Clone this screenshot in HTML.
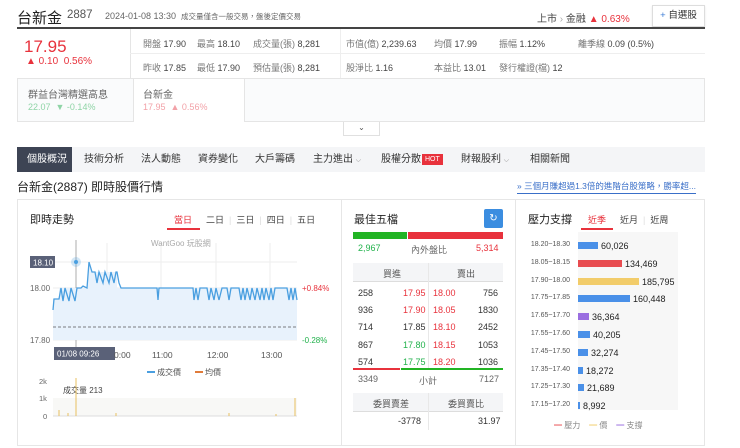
<!DOCTYPE html>
<html><head><meta charset="utf-8"><style>
*{margin:0;padding:0;box-sizing:border-box}
body{width:740px;height:448px;overflow:hidden;background:#fff;font-family:"Liberation Sans","Noto Sans CJK TC",sans-serif;color:#333;position:relative}
.a{position:absolute;white-space:nowrap}
.r{color:#e8323c}.g{color:#22b24c}
.s{font-size:9px;color:#444}
.lbl{color:#777}
</style></head><body>
<!-- header -->
<div class="a" style="left:17px;top:7px;font-size:15px;color:#222">台新金</div>
<div class="a" style="left:67px;top:9px;font-size:11.5px;color:#555">2887</div>
<div class="a" style="left:105px;top:11px;font-size:9px;color:#666">2024-01-08 13:30</div>
<div class="a" style="left:181px;top:11px;font-size:7.5px;color:#666">成交量僅含一般交易，盤後定價交易</div>
<div class="a" style="left:537px;top:10px;font-size:10px;color:#444">上市 <span style="color:#aaa">›</span> 金融 <span class="r">▲ 0.63%</span></div>
<div class="a" style="left:652px;top:5px;width:53px;height:22px;border:1px solid #ddd;box-shadow:0 1px 2px rgba(0,0,0,.1);font-size:9.5px;color:#333;text-align:center;line-height:20px;background:#fff"><span style="color:#3a7bd5">+</span> 自選股</div>
<div class="a" style="left:17px;top:27px;width:688px;height:2px;background:#444"></div>
<!-- price block -->
<div class="a" style="left:130px;top:29px;width:1px;height:49px;background:#e5e5e5"></div>
<div class="a" style="left:130px;top:53px;width:575px;height:1px;background:#eee"></div>
<div class="a" style="left:340px;top:29px;width:1px;height:49px;background:#eee"></div>
<div class="a r" style="left:24px;top:37px;font-size:17px">17.95</div>
<div class="a r" style="left:26px;top:56px;font-size:10px">▲ 0.10&nbsp; 0.56%</div>
<div class="a s" style="left:143px;top:37px"><span class="lbl">開盤</span> 17.90</div>
<div class="a s" style="left:197px;top:37px"><span class="lbl">最高</span> 18.10</div>
<div class="a s" style="left:253px;top:37px"><span class="lbl">成交量(張)</span> 8,281</div>
<div class="a s" style="left:346px;top:37px"><span class="lbl">市值(億)</span> 2,239.63</div>
<div class="a s" style="left:434px;top:37px"><span class="lbl">均價</span> 17.99</div>
<div class="a s" style="left:499px;top:37px"><span class="lbl">振幅</span> 1.12%</div>
<div class="a s" style="left:578px;top:37px"><span class="lbl">離季線</span> 0.09 (0.5%)</div>
<div class="a s" style="left:143px;top:61px"><span class="lbl">昨收</span> 17.85</div>
<div class="a s" style="left:197px;top:61px"><span class="lbl">最低</span> 17.90</div>
<div class="a s" style="left:253px;top:61px"><span class="lbl">預估量(張)</span> 8,281</div>
<div class="a s" style="left:346px;top:61px"><span class="lbl">股淨比</span> 1.16</div>
<div class="a s" style="left:434px;top:61px"><span class="lbl">本益比</span> 13.01</div>
<div class="a s" style="left:499px;top:61px"><span class="lbl">發行權證(檔)</span> 12</div>
<!-- cards -->
<div class="a" style="left:17px;top:78px;width:688px;height:44px;border:1px solid #e5e5e5;background:#fafbfc"></div>
<div class="a" style="left:133px;top:79px;width:112px;height:43px;background:#fff;border-left:1px solid #e5e5e5;border-right:1px solid #e5e5e5"></div>
<div class="a" style="left:28px;top:86px;font-size:10px;color:#666">群益台灣精選高息</div>
<div class="a" style="left:28px;top:102px;font-size:9px;color:#8fd4a6">22.07 &nbsp;▼ -0.14%</div>
<div class="a" style="left:143px;top:86px;font-size:10px;color:#666">台新金</div>
<div class="a" style="left:143px;top:102px;font-size:9px;color:#f2a2a8">17.95 &nbsp;▲ 0.56%</div>
<div class="a" style="left:343px;top:122px;width:37px;height:14px;border:1px solid #e0e0e0;border-top:none;font-size:8px;text-align:center;color:#555;line-height:12px">⌄</div>
<!-- tabs -->
<div class="a" style="left:17px;top:147px;width:688px;height:25px;background:#f4f5f7"></div>
<div class="a" style="left:17px;top:147px;width:55px;height:25px;background:#3d4454"></div>
<div class="a" style="left:17px;top:147px;height:25px;line-height:25px;font-size:10px;color:#333">
<span style="position:absolute;left:10px;color:#fff">個股概況</span>
<span style="position:absolute;left:67px">技術分析</span>
<span style="position:absolute;left:124px">法人動態</span>
<span style="position:absolute;left:181px">資券變化</span>
<span style="position:absolute;left:238px">大戶籌碼</span>
<span style="position:absolute;left:296px">主力進出 <span style="font-size:7px;color:#888">⌵</span></span>
<span style="position:absolute;left:364px">股權分散</span>
<span style="position:absolute;left:405px;top:7px;height:11px;line-height:11px;padding:0 3px;background:#e8323c;color:#fff;font-size:7px">HOT</span>
<span style="position:absolute;left:444px">財報股利 <span style="font-size:7px;color:#888">⌵</span></span>
<span style="position:absolute;left:513px">相關新聞</span>
</div>
<div class="a" style="left:17px;top:178px;font-size:12px;color:#222">台新金(2887) 即時股價行情</div>
<div class="a" style="left:517px;top:180px;font-size:8.5px;color:#3a6fc8;border-bottom:1px solid #3a6fc8;padding-bottom:1px">» 三個月賺超過1.3倍的進階台股策略，勝率超...</div>
<!-- panels -->
<div class="a" style="left:17px;top:199px;width:688px;height:247px;border:1px solid #e6e6e6"></div>
<div class="a" style="left:341px;top:199px;width:1px;height:247px;background:#e6e6e6"></div>
<div class="a" style="left:515px;top:199px;width:1px;height:247px;background:#e6e6e6"></div>
<!-- left panel -->
<div class="a" style="left:30px;top:211px;font-size:11px;color:#222">即時走勢</div>
<div class="a" style="left:174px;top:213px;font-size:9px;color:#e8323c">當日</div>
<div class="a" style="left:167px;top:228px;width:33px;height:2px;background:#e8323c"></div>
<div class="a" style="left:206px;top:213px;font-size:9px;color:#444">二日 <span style="color:#ddd">&nbsp;|&nbsp;</span> 三日 <span style="color:#ddd">&nbsp;|&nbsp;</span> 四日 <span style="color:#ddd">&nbsp;|&nbsp;</span> 五日</div>
<svg class="a" style="left:17px;top:238px" width="324" height="190">
<g stroke="#eee" stroke-width="1">
<line x1="36" y1="24" x2="280" y2="24"/><line x1="36" y1="50" x2="280" y2="50"/><line x1="36" y1="102" x2="280" y2="102"/>
<line x1="90" y1="5" x2="90" y2="102"/><line x1="144" y1="5" x2="144" y2="102"/><line x1="199" y1="5" x2="199" y2="102"/><line x1="253" y1="5" x2="253" y2="102"/>
</g>
<line x1="59" y1="2" x2="59" y2="110" stroke="#999" stroke-width="0.8"/>
<polygon points="36,72 36,61 42,61 42,50 70,50 72,24 75,34 100,34 100,50 280,50 280,102 36,102" fill="#e8f2fc"/>
<polyline fill="none" stroke="#4a9fe0" stroke-width="1.3" points="36,72 37,61 42,61 44,50 46,63 48,50 52,63 54,50 58,63 60,50 64,50 66,48 70,50 72,24 75,34 78,34 80,45 82,34 86,45 88,34 92,45 94,34 97,45 99,34 100,34 102,45 104,50 140,50 141,62 142,50 176,50 177,62 179,50 181,62 183,50 190,50 192,62 194,50 197,62 199,50 202,62 205,50 210,50 212,62 214,50 222,50 224,62 226,50 228,62 230,50 233,62 235,50 238,62 240,50 243,62 245,50 247,62 249,50 252,62 254,50 256,62 258,50 270,50 272,62 274,50 276,62 278,50 280,62"/>
<line x1="36" y1="89" x2="280" y2="89" stroke="#555" stroke-dasharray="3,2" stroke-width="0.8"/>
<circle cx="59" cy="24" r="5" fill="#4a9fe0" opacity=".25"/><circle cx="59" cy="24" r="2" fill="#4a9fe0"/>
<rect x="13" y="18" width="25" height="12" fill="#5a6178"/><text x="16" y="27.5" font-size="8" fill="#fff" font-family="Liberation Sans">18.10</text>
<text x="13" y="53" font-size="8" fill="#666" font-family="Liberation Sans">18.00</text>
<text x="13" y="105" font-size="8" fill="#666" font-family="Liberation Sans">17.80</text>
<text x="285" y="53" font-size="8" fill="#e8323c" font-family="Liberation Sans">+0.84%</text>
<text x="285" y="105" font-size="8" fill="#22b24c" font-family="Liberation Sans">-0.28%</text>
<text x="134" y="8" font-size="8" fill="#aaa" font-family="Liberation Sans">WantGoo 玩股網</text>
<rect x="37" y="109" width="61" height="13" fill="#5a6178"/><text x="40" y="118.5" font-size="8" fill="#fff" font-family="Liberation Sans">01/08 09:26</text>
<g font-size="8.5" fill="#555" font-family="Liberation Sans"><text x="97" y="120">0:00</text><text x="135" y="120">11:00</text><text x="190" y="120">12:00</text><text x="244" y="120">13:00</text></g>
<line x1="130" y1="134" x2="138" y2="134" stroke="#4a9fe0" stroke-width="2"/><text x="140" y="137" font-size="8" fill="#555">成交價</text>
<line x1="178" y1="134" x2="186" y2="134" stroke="#e07b3a" stroke-width="2"/><text x="188" y="137" font-size="8" fill="#555">均價</text>
<g font-size="7.5" fill="#666" font-family="Liberation Sans"><text x="22" y="146">2k</text><text x="22" y="163">1k</text><text x="26" y="181">0</text></g>
<rect x="36" y="160" width="244" height="18" fill="#f8f8f6"/>
<line x1="36" y1="178" x2="280" y2="178" stroke="#ddd"/>
<text x="46" y="155" font-size="8" fill="#444">成交量 213</text>
<g stroke="#e8c060" stroke-width="1"><line x1="42" y1="178" x2="42" y2="172"/><line x1="59" y1="178" x2="59" y2="140"/><line x1="51" y1="178" x2="51" y2="175"/><line x1="99" y1="178" x2="99" y2="175"/><line x1="212" y1="178" x2="212" y2="175"/><line x1="278" y1="178" x2="278" y2="160"/><line x1="259" y1="178" x2="259" y2="176"/></g>
</svg>
<!-- middle panel -->
<div class="a" style="left:354px;top:211px;font-size:11px;color:#222">最佳五檔</div>
<div class="a" style="left:484px;top:209px;width:19px;height:19px;background:#3b8de0;border-radius:2px;color:#fff;font-size:10px;text-align:center;line-height:19px">↻</div>
<div class="a" style="left:353px;top:232px;width:54px;height:7px;background:#22b424"></div>
<div class="a" style="left:408px;top:232px;width:95px;height:7px;background:#e8323c"></div>
<div class="a g" style="left:358px;top:243px;font-size:9px">2,967</div>
<div class="a" style="left:411px;top:243px;font-size:9px;color:#666">內外盤比</div>
<div class="a r" style="left:476px;top:243px;font-size:9px">5,314</div>
<div class="a" style="left:353px;top:263px;width:150px;height:19px;background:#f4f5f7;border-bottom:1px solid #ddd"></div>
<div class="a" style="left:428px;top:263px;width:1px;height:105px;background:#e8e8e8"></div>
<div class="a" style="left:383px;top:267px;font-size:9px;color:#555">買進</div>
<div class="a" style="left:457px;top:267px;font-size:9px;color:#555">賣出</div>
<div class="a" style="left:358px;top:285px;font-size:9px;line-height:17.2px;color:#333">258<br>936<br>714<br>867<br>574</div>
<div class="a" style="left:403px;top:285px;font-size:9px;line-height:17.2px"><span class="r">17.95</span><br><span class="r">17.90</span><br>17.85<br><span class="g">17.80</span><br><span class="g">17.75</span></div>
<div class="a r" style="left:433px;top:285px;font-size:9px;line-height:17.2px">18.00<br>18.05<br>18.10<br>18.15<br>18.20</div>
<div class="a" style="left:498px;top:285px;font-size:9px;line-height:17.2px;text-align:right;transform:translateX(-100%)">756<br>1830<br>2452<br>1053<br>1036</div>
<div class="a" style="left:353px;top:368px;width:47px;height:2px;background:#e8323c"></div>
<div class="a" style="left:401px;top:368px;width:102px;height:2px;background:#22b424"></div>
<div class="a" style="left:358px;top:374px;font-size:9px;color:#666">3349</div>
<div class="a" style="left:419px;top:374px;font-size:9px;color:#666">小計</div>
<div class="a" style="left:479px;top:374px;font-size:9px;color:#666">7127</div>
<div class="a" style="left:353px;top:393px;width:150px;height:19px;background:#f4f5f7;border-bottom:1px solid #ddd"></div>
<div class="a" style="left:428px;top:393px;width:1px;height:37px;background:#e8e8e8"></div>
<div class="a" style="left:373px;top:397px;font-size:9px;color:#555">委買賣差</div>
<div class="a" style="left:448px;top:397px;font-size:9px;color:#555">委買賣比</div>
<div class="a" style="left:398px;top:416px;font-size:9px">-3778</div>
<div class="a" style="left:478px;top:416px;font-size:9px">31.97</div>
<!-- right panel -->
<div class="a" style="left:528px;top:211px;font-size:11px;color:#222">壓力支撐</div>
<div class="a" style="left:588px;top:213px;font-size:9px;color:#e8323c">近季</div>
<div class="a" style="left:581px;top:228px;width:32px;height:2px;background:#e8323c"></div>
<div class="a" style="left:620px;top:213px;font-size:9px;color:#444">近月 <span style="color:#ddd">&nbsp;|&nbsp;</span> 近周</div>
<div class="a" style="left:578px;top:232px;width:100px;height:178px;background:#f7f7f7"></div>
<div class="a" style="left:530px;top:236px;font-size:7px;color:#555;line-height:17.8px;text-align:right;width:40px">18.20~18.30<br>18.05~18.15<br>17.90~18.00<br>17.75~17.85<br>17.65~17.70<br>17.55~17.60<br>17.45~17.50<br>17.35~17.40<br>17.25~17.30<br>17.15~17.20</div>
<div class="a" style="left:578px;top:238px;font-size:9px;line-height:17.8px;color:#222">
<div><span style="display:inline-block;width:20px;height:7px;background:#4a90e8;margin-right:3px"></span>60,026</div>
<div><span style="display:inline-block;width:44px;height:7px;background:#e84c50;margin-right:3px"></span>134,469</div>
<div><span style="display:inline-block;width:61px;height:7px;background:#f2cc6a;margin-right:3px"></span>185,795</div>
<div><span style="display:inline-block;width:52px;height:7px;background:#4a90e8;margin-right:3px"></span>160,448</div>
<div><span style="display:inline-block;width:11px;height:7px;background:#9a6ee0;margin-right:3px"></span>36,364</div>
<div><span style="display:inline-block;width:12px;height:7px;background:#4a90e8;margin-right:3px"></span>40,205</div>
<div><span style="display:inline-block;width:10px;height:7px;background:#4a90e8;margin-right:3px"></span>32,274</div>
<div><span style="display:inline-block;width:5px;height:7px;background:#4a90e8;margin-right:3px"></span>18,272</div>
<div><span style="display:inline-block;width:6px;height:7px;background:#4a90e8;margin-right:3px"></span>21,689</div>
<div><span style="display:inline-block;width:2px;height:7px;background:#4a90e8;margin-right:3px"></span>8,992</div>
</div>
<div class="a" style="left:554px;top:420px;font-size:8px;color:#888"><span style="color:#e84c50">━</span> 壓力 &nbsp;&nbsp;&nbsp;<span style="color:#f2cc6a">━</span> 價 &nbsp;&nbsp;&nbsp;<span style="color:#9a6ee0">━</span> 支撐</div>
</body></html>
